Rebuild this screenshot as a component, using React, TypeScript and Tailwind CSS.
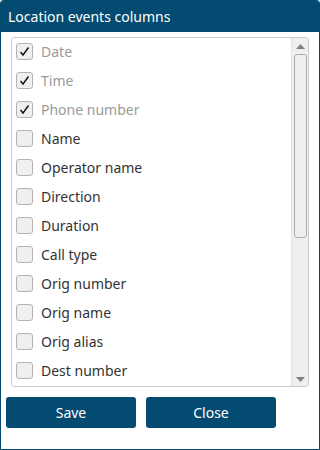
import React from "react";

const items: { label: string; checked: boolean }[] = [
  { label: "Date", checked: true },
  { label: "Time", checked: true },
  { label: "Phone number", checked: true },
  { label: "Name", checked: false },
  { label: "Operator name", checked: false },
  { label: "Direction", checked: false },
  { label: "Duration", checked: false },
  { label: "Call type", checked: false },
  { label: "Orig number", checked: false },
  { label: "Orig name", checked: false },
  { label: "Orig alias", checked: false },
  { label: "Dest number", checked: false },
];

export default function App() {
  return (
    <div
      className="w-[320px] h-[450px] bg-white border border-[#044b71] rounded-t-[3px] flex flex-col overflow-hidden"
      style={{ fontFamily: '"Noto Sans", "Open Sans", sans-serif' }}
    >
      <div className="h-[31px] shrink-0 bg-[#044b71] text-white text-[14px] leading-none flex items-center px-[7px]">
        Location events columns
      </div>
      <div className="px-[10px] pt-[5px]">
        <div className="h-[350px] border border-[#cccccc] rounded-[3px] flex overflow-hidden">
          <div className="flex-1 overflow-hidden pl-[4px] -mt-[1px]">
            {items.map((it) => (
              <div key={it.label} className="h-[29px] flex items-center gap-[8px]">
                <div className="w-[17px] h-[17px] rounded-[3px] border border-[#b3b3b3] bg-[#efefef] flex items-center justify-center shrink-0">
                  {it.checked && (
                    <svg width="11" height="11" viewBox="0 0 11 11">
                      <path d="M1.5 6 L4 9 L9.5 1.5" fill="none" stroke="#111" strokeWidth="1.4" />
                    </svg>
                  )}
                </div>
                <span className={"text-[14px] leading-none " + (it.checked ? "text-[#9a9a9a]" : "text-[#333333]")}>
                  {it.label}
                </span>
              </div>
            ))}
          </div>
          <div className="w-[17px] shrink-0 bg-[#efefef] border-l border-[#e2e2e2] flex flex-col items-center">
            <div className="h-[16px] flex items-center justify-center">
              <svg width="9" height="5" viewBox="0 0 9 5">
                <path d="M0 5 L4.5 0 L9 5 Z" fill="#808080" />
              </svg>
            </div>
            <div className="w-[13px] h-[184px] rounded-[3px] border border-[#adadad] bg-[#efefef]" />
            <div className="flex-1" />
            <div className="h-[14px] flex items-center justify-center">
              <svg width="9" height="5" viewBox="0 0 9 5">
                <path d="M0 0 L4.5 5 L9 0 Z" fill="#808080" />
              </svg>
            </div>
          </div>
        </div>
      </div>
      <div className="flex gap-[10px] px-[5px] mt-[10px]">
        <button className="w-[130px] h-[31px] rounded-[3px] bg-[#044b71] text-white text-[14px] leading-none flex items-center justify-center">
          Save
        </button>
        <button className="w-[130px] h-[31px] rounded-[3px] bg-[#044b71] text-white text-[14px] leading-none flex items-center justify-center">
          Close
        </button>
      </div>
    </div>
  );
}
